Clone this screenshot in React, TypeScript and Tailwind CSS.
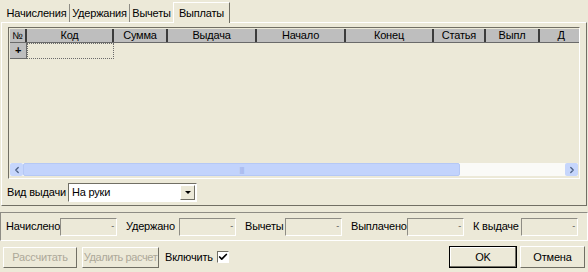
import { Check, ChevronLeft, ChevronRight } from "lucide-react";

const columns = [
  { title: "Код", w: "w-[87px]" },
  { title: "Сумма", w: "w-[54px]" },
  { title: "Выдача", w: "w-[89px]" },
  { title: "Начало", w: "w-[89px]" },
  { title: "Конец", w: "w-[88px]" },
  { title: "Статья", w: "w-[52px]" },
  { title: "Выпл", w: "w-[54px]" },
  { title: "Д", w: "w-[44px]" },
];

const totals = [
  { label: "Начислено", lw: "w-[54px]" },
  { label: "Удержано", lw: "w-[53px]" },
  { label: "Вычеты", lw: "w-[40px]" },
  { label: "Выплачено", lw: "w-[56px]" },
  { label: "К выдаче", lw: "w-[48px]" },
];

function Field() {
  return (
    <div className="w-[57px] h-[18px] shrink-0 border border-t-[#8e8c84] border-l-[#8e8c84] border-b-white border-r-white bg-[#ECE9D8] flex items-center justify-end pr-[2px]">
      <span className="text-[9px] leading-none text-[#555]">-</span>
    </div>
  );
}

export default function App() {
  return (
    <div className="w-[588px] h-[272px] overflow-hidden bg-[#ECE9D8] text-[11px] tracking-[-0.2px] text-black font-['Liberation_Sans',Arial,sans-serif] select-none">
      {/* tabs */}
      <div className="h-[22px] flex items-end pl-[4px]">
        <div className="w-[66px] h-[18px] flex items-center justify-center border-r border-[#8e8c84]">Начисления</div>
        <div className="w-[60px] h-[18px] flex items-center justify-center border-r border-[#8e8c84]">Удержания</div>
        <div className="w-[43px] h-[18px] flex items-center justify-center">Вычеты</div>
        <div className="w-[57px] h-[21px] -mb-px relative z-10 flex items-center justify-center bg-[#ECE9D8] border border-b-0 border-t-white border-l-white border-r-[#716f64]">
          Выплаты
        </div>
      </div>

      {/* tab sheet */}
      <div className="mx-[1px] h-[184px] border border-t-white border-l-white border-r-[#716f64] border-b-[#716f64] flex flex-col px-[6px] pt-[4px]">
        <div className="h-[152px] border border-t-[#716f64] border-l-[#716f64] border-b-white border-r-white flex flex-col">
          <div className="flex-1 flex flex-col pl-[1px] pt-[1px] overflow-hidden">
            <div className="h-[14px] flex bg-[#BEBEBE] border-b border-[#6a6a6a]">
              <div className="w-[17px] shrink-0 border-r-2 border-[#3c3c3c] flex items-center justify-center text-[10px]">№</div>
              {columns.map((c) => (
                <div
                  key={c.title}
                  className={`${c.w} shrink-0 border-r-2 border-[#3c3c3c] flex items-center justify-center leading-none`}
                >
                  {c.title}
                </div>
              ))}
            </div>
            <div className="h-[16px] flex">
              <div className="w-[17px] bg-[#BEBEBE] border-r border-b border-[#6a6a6a] flex items-center justify-center font-bold text-[11px] leading-none">
                +
              </div>
              <div className="w-[87px] border border-dotted border-[#6a6a6a]" />
            </div>
          </div>
          {/* scrollbar */}
          <div className="h-[13px] mx-[1px] mb-[2px] flex bg-[#FAFAF7]">
            <div className="w-[13px] bg-[#C6D6FC] flex items-center justify-center rounded-[2px]">
              <ChevronLeft className="w-[10px] h-[10px] text-[#4D6185]" strokeWidth={3} />
            </div>
            <div className="w-[437px] bg-[#C2D3FC] border border-[#B5C8F5] rounded-[2px] flex items-center justify-center">
              <span className="text-[8px] text-[#9EB4EA] tracking-[-1px] leading-none">||||</span>
            </div>
            <div className="flex-1" />
            <div className="w-[13px] bg-[#C6D6FC] flex items-center justify-center rounded-[2px]">
              <ChevronRight className="w-[10px] h-[10px] text-[#4D6185]" strokeWidth={3} />
            </div>
          </div>
        </div>
        <div className="mt-[4px] flex items-center -ml-[1px]">
          <span className="w-[61px]">Вид выдачи</span>
          <div className="w-[129px] h-[19px] border border-t-[#716f64] border-l-[#716f64] border-b-white border-r-white bg-white flex items-center">
            <span className="flex-1 pl-[3px]">На руки</span>
            <div className="w-[15px] h-[15px] mr-[1px] bg-[#ECE9D8] border border-t-white border-l-white border-b-[#716f64] border-r-[#716f64] flex items-center justify-center">
              <div className="w-0 h-0 border-l-[3px] border-r-[3px] border-t-[3px] border-l-transparent border-r-transparent border-t-black" />
            </div>
          </div>
        </div>
      </div>

      {/* totals */}
      <div className="mt-[6px] h-[29px] border border-t-[#8e8c84] border-l-[#8e8c84] border-b-white border-r-white flex items-center gap-[9px] pl-[5px]">
        {totals.map((t) => (
          <div key={t.label} className="flex items-center shrink-0">
            <span className={`${t.lw} shrink-0 whitespace-nowrap`}>{t.label}</span>
            <Field />
          </div>
        ))}
      </div>

      {/* buttons */}
      <div className="mt-[5px] flex items-center pl-[3px] pr-[3px] whitespace-nowrap">
        <button className="w-[74px] h-[21px] border border-t-white border-l-white border-b-[#716f64] border-r-[#716f64] text-[#ACA899]">
          Рассчитать
        </button>
        <button className="ml-[5px] w-[77px] h-[21px] border border-t-white border-l-white border-b-[#716f64] border-r-[#716f64] text-[#ACA899] tracking-[-0.4px]">
          Удалить расчет
        </button>
        <span className="ml-[6px]">Включить</span>
        <div className="ml-[4px] w-[12px] h-[12px] bg-white border border-t-[#716f64] border-l-[#716f64] border-b-white border-r-white flex items-center justify-center">
          <Check className="w-[10px] h-[10px]" strokeWidth={4} />
        </div>
        <div className="flex-1" />
        <button className="w-[68px] h-[22px] border border-black shadow-[inset_-1px_-1px_0_#716f64,inset_1px_1px_0_white]">
          OK
        </button>
        <button className="ml-[3px] w-[65px] h-[22px] border border-t-white border-l-white border-b-[#716f64] border-r-[#716f64]">
          Отмена
        </button>
      </div>
    </div>
  );
}
